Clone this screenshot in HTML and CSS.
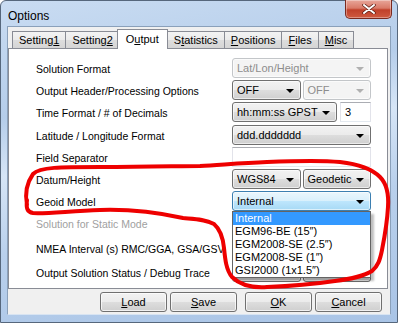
FILE: index.html
```html
<!DOCTYPE html>
<html lang="en">
<head>
    <meta charset="UTF-8">
    <title>Options</title>
    <link rel="stylesheet" href="styles.css">
</head>
<body>
    <div class="window">
        <div class="titlebar">
            <span class="title">Options</span>
            <div class="close-btn">
                <svg width="14" height="10" viewBox="0 0 14 10">
                    <path d="M2 1 L12 9 M12 1 L2 9" stroke="#5a1a10" stroke-width="3.4" stroke-linecap="round"/>
                    <path d="M2 1 L12 9 M12 1 L2 9" stroke="#fff" stroke-width="2" stroke-linecap="round"/>
                </svg>
            </div>
        </div>

        <div class="client">
            <div class="tabs">
                <div class="tab">Setting<u>1</u></div>
                <div class="tab">Setting<u>2</u></div>
                <div class="tab active">O<u>u</u>tput</div>
                <div class="tab">S<u>t</u>atistics</div>
                <div class="tab"><u>P</u>ositions</div>
                <div class="tab"><u>F</u>iles</div>
                <div class="tab"><u>M</u>isc</div>
            </div>

            <div class="panel">
                <div class="form">
                    <div class="label">Solution Format</div>
                    <div class="ctrl"><div class="combo disabled">Lat/Lon/Height</div></div>

                    <div class="label">Output Header/Processing Options</div>
                    <div class="ctrl split">
                        <div class="combo">OFF</div>
                        <div class="combo disabled">OFF</div>
                    </div>

                    <div class="label">Time Format / # of Decimals</div>
                    <div class="ctrl time">
                        <div class="combo">hh:mm:ss GPST</div>
                        <div class="edit">3</div>
                    </div>

                    <div class="label">Latitude / Longitude Format</div>
                    <div class="ctrl"><div class="combo">ddd.ddddddd</div></div>

                    <div class="label">Field Separator</div>
                    <div class="ctrl"><div class="edit"></div></div>

                    <div class="label">Datum/Height</div>
                    <div class="ctrl split">
                        <div class="combo">WGS84</div>
                        <div class="combo">Geodetic</div>
                    </div>

                    <div class="label">Geoid Model</div>
                    <div class="ctrl dropdown-host">
                        <div class="combo focused">Internal</div>
                        <ul class="dropdown">
                            <li class="selected">Internal</li>
                            <li>EGM96-BE (15″)</li>
                            <li>EGM2008-SE (2.5″)</li>
                            <li>EGM2008-SE (1″)</li>
                            <li>GSI2000 (1x1.5″)</li>
                        </ul>
                    </div>

                    <div class="label muted">Solution for Static Mode</div>
                    <div class="ctrl"><div class="combo disabled"></div></div>

                    <div class="label low">NMEA Interval (s) RMC/GGA, GSA/GSV</div>
                    <div class="ctrl low split">
                        <div class="edit"></div>
                        <div class="edit"></div>
                    </div>

                    <div class="label low">Output Solution Status / Debug Trace</div>
                    <div class="ctrl low split">
                        <div class="combo"></div>
                        <div class="combo"></div>
                    </div>
                </div>
            </div>

            <div class="buttons">
                <button class="btn"><u>L</u>oad</button>
                <button class="btn"><u>S</u>ave</button>
                <button class="btn btn-gap"><u>O</u>K</button>
                <button class="btn"><u>C</u>ancel</button>
            </div>
        </div>

        <svg class="annotation" width="398" height="323" viewBox="0 0 398 323">
            <path d="M27 205 C25 195 26 184 33 174 C40 167 60 167 100 167 C150 167 180 166 200 166
                     C220 165 240 163 267 162 C290 161 320 160 340 162 C358 164 372 169 380 177
                     C386 183 389 192 388 207 C387 225 384 240 382 250 C380 260 378 266 372 271
                     C362 277 350 279 335 281 C315 284 295 286 267 287 C252 288 240 285 232 277
                     C226 270 225 258 224 248 C223 238 221 230 214 224 C205 219 195 219 183 218
                     C160 213 130 209 100 210 C70 211 45 214 33 213 C27 212 26 208 27 200"
                  fill="none" stroke="#ee0000" stroke-width="4" stroke-linecap="round" stroke-linejoin="round"/>
        </svg>
    </div>
</body>
</html>
```

FILE: styles.css
```css
* {
    margin: 0;
    padding: 0;
    box-sizing: border-box;
}

body {
    width: 398px;
    height: 323px;
    overflow: hidden;
    font-family: "Liberation Sans", Arial, sans-serif;
    font-size: 10.5px;
    color: #000;
    background: #fff;
}

.window {
    position: relative;
    width: 398px;
    height: 323px;
    display: flex;
    flex-direction: column;
    padding: 0 6px 7px 6px;
    border: 1px solid #56677c;
    border-radius: 6px 6px 0 0;
    background: linear-gradient(170deg, #c9dcf2 0%, #b5cdea 30%, #d6e5f6 45%, #b9d0ec 65%, #a9c4e6 100%);
}

/* title bar */

.titlebar {
    height: 27px;
    display: flex;
    align-items: flex-start;
    justify-content: space-between;
    padding-left: 1px;
}

.title {
    font-size: 12px;
    margin-top: 8px;
    color: #000;
}

.close-btn {
    width: 47px;
    height: 19px;
    margin-top: -1px;
    margin-right: -1px;
    display: flex;
    align-items: center;
    justify-content: center;
    border: 1px solid #7a2a1f;
    border-top: none;
    border-radius: 0 0 5px 5px;
    background: linear-gradient(#e8a69a 0%, #d97a68 45%, #c0402a 55%, #cf5a40 100%);
    box-shadow: inset 0 0 0 1px rgba(255, 255, 255, 0.35);
}

/* client area */

.client {
    flex: 1;
    display: flex;
    flex-direction: column;
    background: #f0f0f0;
    border: 1px solid #8aa0ba;
    border-bottom-color: #d8e4f2;
    padding: 2px 2px 2px 0;
}

.tabs {
    display: flex;
    align-items: flex-end;
    height: 19px;
    padding-left: 4px;
    position: relative;
    z-index: 1;
}

.tab {
    height: 17px;
    padding: 0 6px;
    margin-right: -1px;
    display: flex;
    align-items: center;
    border: 1px solid #898c95;
    border-bottom: none;
    background: linear-gradient(#f3f3f3 0%, #ebebeb 50%, #dddddd 51%, #d5d5d5 100%);
    white-space: nowrap;
    font-size: 11px;
}

.tab.active {
    height: 20px;
    margin: 0 -1px 0 -2px;
    padding: 0 8px 2px 8px;
    background: #fff;
    position: relative;
    top: 1px;
}

.panel {
    height: 241px;
    background: #fff;
    border: 1px solid #898c95;
    padding: 9px 16px 0 27px;
}

.form {
    display: grid;
    grid-template-columns: 1fr 139px;
    grid-template-rows: repeat(8, 20px) 22px 22px;
    row-gap: 2.2px;
}

.label {
    display: flex;
    align-items: center;
    white-space: nowrap;
    padding-top: 2px;
}

.label.muted {
    color: #a0a0a0;
}

.label.low {
    height: 20px;
    align-self: end;
}

.ctrl {
    display: flex;
    gap: 2px;
}

.ctrl.low {
    height: 20px;
    align-self: end;
}

.ctrl > * {
    flex: 1;
}

.ctrl.time {
    gap: 3px;
}

.ctrl.time .edit {
    flex: 0 0 31px;
}

.combo {
    position: relative;
    height: 20px;
    display: flex;
    align-items: center;
    padding-left: 4px;
    border: 1px solid #707070;
    border-radius: 3px;
    background: linear-gradient(#f2f2f2 0%, #ebebeb 50%, #dddddd 51%, #cfcfcf 100%);
    box-shadow: inset 0 0 0 1px rgba(255, 255, 255, 0.6);
    white-space: nowrap;
    font-size: 11px;
}

.combo::after {
    content: "";
    position: absolute;
    right: 6px;
    top: 8px;
    border-left: 4px solid transparent;
    border-right: 4px solid transparent;
    border-top: 4px solid #000;
}

.combo.disabled {
    color: #8d8d8d;
    border-color: #c3c6c9;
    background: #f4f4f4;
}

.combo.disabled::after {
    border-top-color: #b0b0b0;
}

.combo.focused {
    border-color: #3c7fb1;
    background: linear-gradient(#eaf6fd 0%, #d9f0fc 50%, #bee6fd 51%, #a7d9f5 100%);
}

.edit {
    height: 20px;
    display: flex;
    align-items: center;
    padding-left: 4px;
    background: #fff;
    border: 1px solid #e2e3ea;
    border-top-color: #abadb3;
    border-bottom-color: #e3e9ef;
    font-size: 11px;
}

/* opened list of the geoid combo */

.dropdown-host {
    position: relative;
}

.dropdown {
    position: absolute;
    left: 0;
    right: 0;
    top: 20px;
    list-style: none;
    background: #fff;
    border: 1px solid #646464;
    box-shadow: 3px 3px 2px rgba(0, 0, 0, 0.25);
    z-index: 5;
    font-size: 11px;
}

.dropdown li {
    height: 13px;
    line-height: 13px;
    padding-left: 2px;
    white-space: nowrap;
}

.dropdown li.selected {
    background: #3399ff;
    color: #fff;
}

/* dialog buttons */

.buttons {
    display: flex;
    justify-content: flex-end;
    gap: 3px;
    padding: 3px 6px 0 0;
}

.btn {
    width: 67px;
    height: 20px;
    font-family: inherit;
    font-size: 11px;
    color: #000;
    border: 1px solid #707070;
    border-radius: 3px;
    background: linear-gradient(#f2f2f2 0%, #ebebeb 50%, #dddddd 51%, #cfcfcf 100%);
    box-shadow: inset 0 0 0 1px rgba(255, 255, 255, 0.7);
}

.btn-gap {
    margin-left: 5px;
}

.annotation {
    position: absolute;
    left: -1px;
    top: -1px;
    pointer-events: none;
    z-index: 10;
}
```
